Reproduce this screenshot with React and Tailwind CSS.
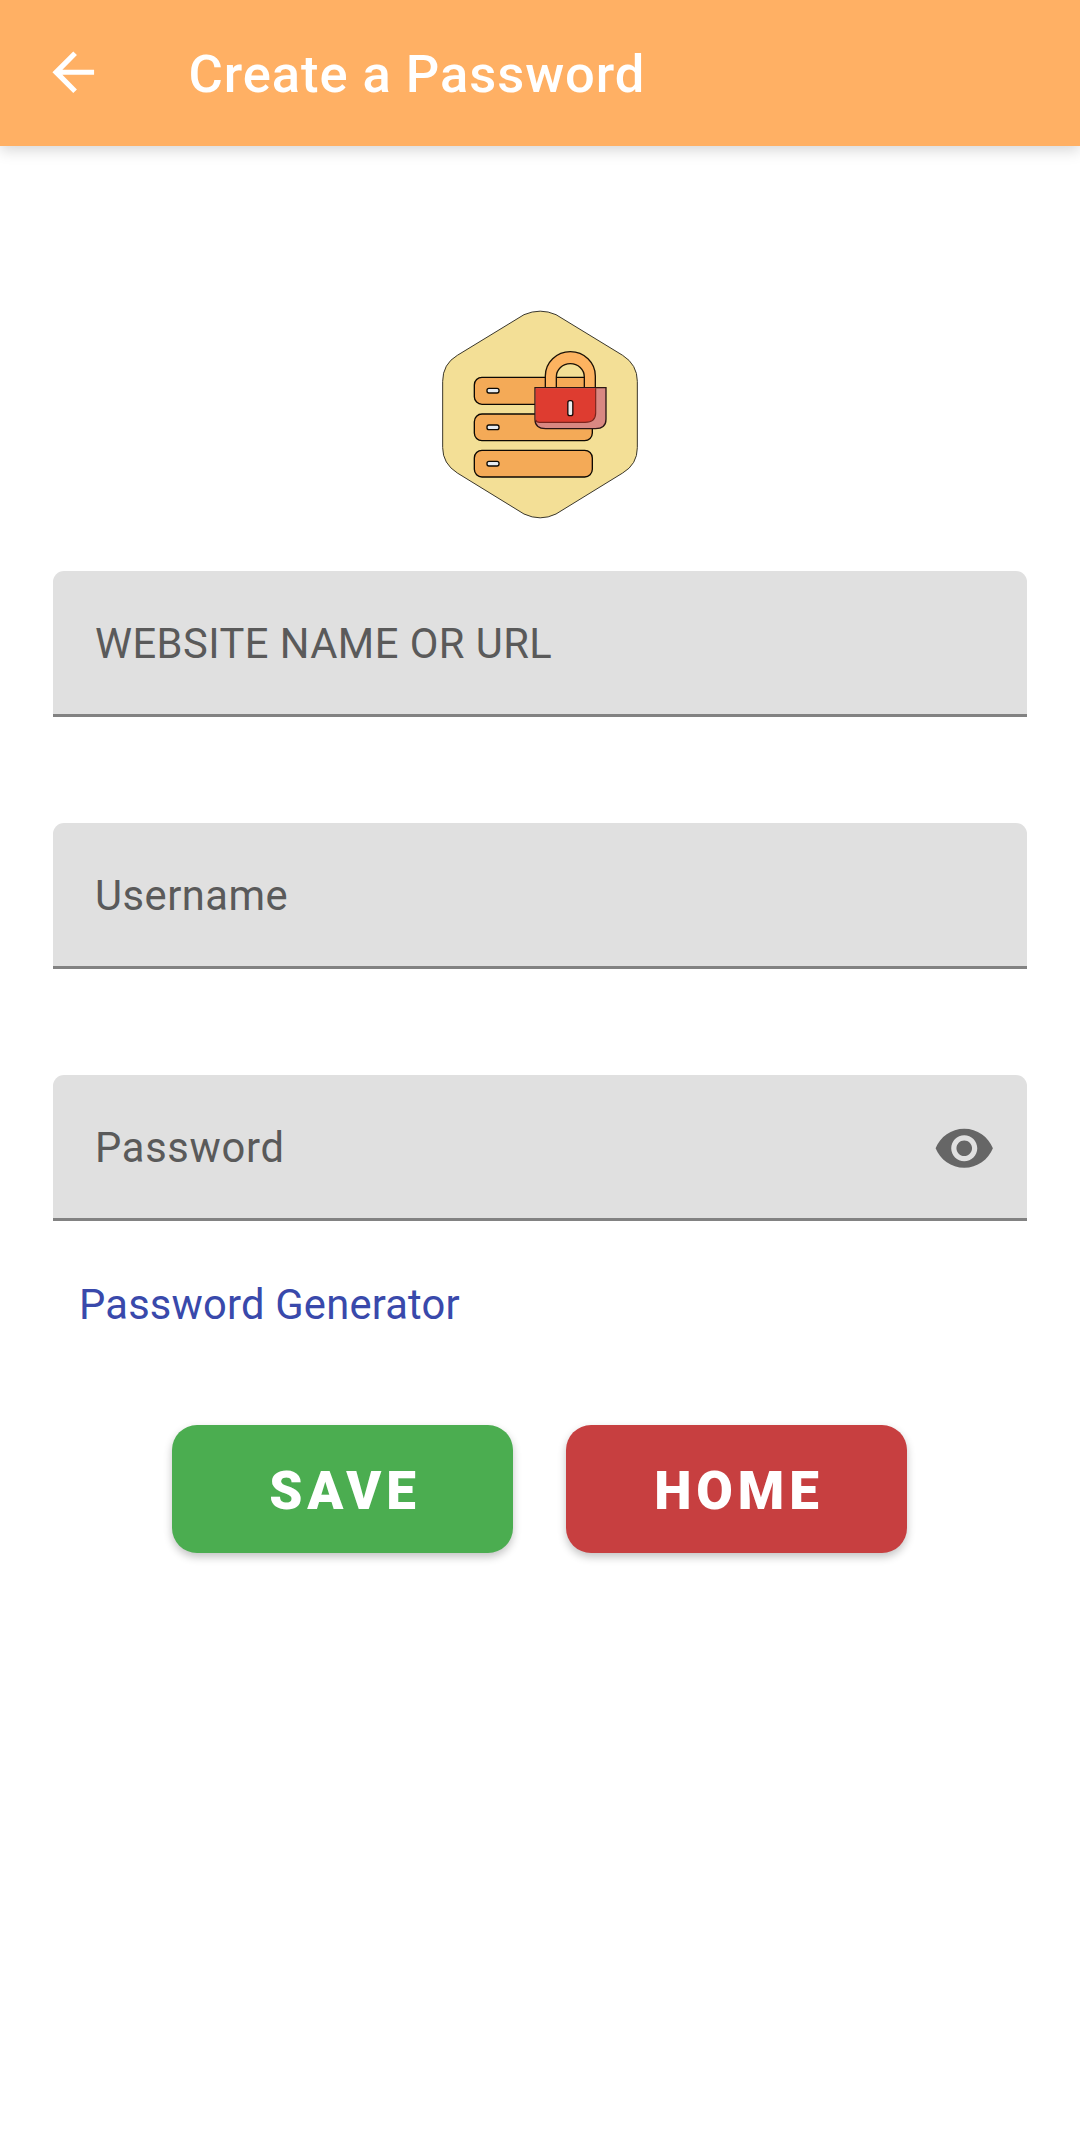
function Logo() {
  return (
    <svg className="block h-[230px] w-[220px]" viewBox="0 0 660 690" aria-hidden="true">
      <path
        d="M282 44Q331 23 378 44L578 166Q622 194 622 244V443Q622 493 578 519L378 642Q331 665 282 642L82 519Q38 491 38 443V244Q38 192 82 166Z"
        fill="#f3df96"
        stroke="#3a372c"
        strokeWidth="3"
      />
      <g fill="#f4aa57" stroke="#0c0803" strokeWidth="4">
        <rect x="133" y="232" width="354" height="81" rx="23" />
        <rect x="133" y="342" width="354" height="80" rx="23" />
        <rect x="133" y="451" width="354" height="80" rx="23" />
      </g>
      <g fill="#e6ecf2" stroke="#0c0803" strokeWidth="4">
        <rect x="171" y="265" width="36" height="14" rx="6" />
        <rect x="171" y="375" width="36" height="14" rx="6" />
        <rect x="171" y="484" width="36" height="14" rx="6" />
      </g>
      <path
        d="M346 263V228A75 73 0 0 1 496 228V263H463V231A42 40 0 0 0 379 231V263Z"
        fill="#fdb360"
        stroke="#1c1206"
        strokeWidth="4"
      />
      <path d="M315 263H528V358Q528 386 496 386H347Q315 386 315 358Z" fill="#d98882" stroke="#2b1715" strokeWidth="4" />
      <path d="M317 265H497V339Q497 367 465 367H329Q319 367 317 360Z" fill="#de3c30" />
      <path d="M497 265V339Q497 367 465 367H329Q319 367 317 360" fill="none" stroke="#7d241d" strokeWidth="3.5" />
      <rect x="413.5" y="302" width="15" height="45" rx="6" fill="#eceef0" stroke="#1a0906" strokeWidth="4" />
    </svg>
  );
}

function Field({ label, className, children }) {
  return (
    <div
      className={`flex h-[146px] items-center justify-between rounded-t-[11px] border-b-[3px] border-[#828282] bg-[#e0e0e0] pt-[3px] pl-[42px] pr-[32px] ${className}`}
    >
      <span className="text-[41.7px] leading-none text-[#5a5a5a]">{label}</span>
      {children}
    </div>
  );
}

function ActionButton({ label, className }) {
  return (
    <button
      type="button"
      className={`flex h-32 w-[341px] items-center justify-center rounded-[25px] pt-1 pl-[5px] text-[53px] font-black leading-none tracking-[4.9px] text-white shadow-[0_4px_8px_rgba(0,0,0,0.24)] ${className}`}
    >
      {label}
    </button>
  );
}

export default function App() {
  return (
    <div className="flex h-[2131px] w-[1080px] flex-col bg-white font-['Roboto',sans-serif]">
      <header className="flex h-[146px] items-center bg-[#ffb064] pl-[42px] shadow-[0_4px_14px_rgba(0,0,0,0.17)]">
        <svg className="-mt-px size-[62.5px]" viewBox="0 0 24 24" fill="white" aria-hidden="true">
          <path d="M20 11H7.83l5.59-5.59L12 4l-8 8 8 8 1.41-1.41L7.83 13H20v-2z" />
        </svg>
        <h1 className="ml-[84px] pt-[3px] text-[52.5px] font-medium leading-none tracking-[0.95px] text-white">Create a Password</h1>
      </header>
      <main className="flex flex-col px-[53px] pt-[154px]">
        <div className="flex justify-center">
          <Logo />
        </div>
        <Field label="WEBSITE NAME OR URL" className="mt-[41px] tracking-[0.45px]" />
        <Field label="Username" className="mt-[106px] tracking-[0.5px]" />
        <Field label="Password" className="mt-[106px] tracking-[0.7px]">
          <svg className="mt-px size-[62.5px]" viewBox="0 0 24 24" fill="#666666" aria-hidden="true">
            <path d="M12 4.5C7 4.5 2.73 7.61 1 12c1.73 4.39 6 7.5 11 7.5s9.27-3.11 11-7.5c-1.73-4.39-6-7.5-11-7.5zM12 17c-2.76 0-5-2.24-5-5s2.24-5 5-5 5 2.24 5 5-2.24 5-5 5zm0-8c-1.66 0-3 1.34-3 3s1.34 3 3 3 3-1.34 3-3-1.34-3-3-3z" />
          </svg>
        </Field>
        <a href="#" className="ml-[26px] mt-[63px] self-start text-[41.7px] leading-[42px] tracking-[0.2px] text-[#3949ab]">
          Password Generator
        </a>
        <div className="mt-[99px] flex gap-[53px] pl-[119px]">
          <ActionButton label="SAVE" className="bg-[#4bad50]" />
          <ActionButton label="HOME" className="bg-[#c73f40]" />
        </div>
      </main>
    </div>
  );
}
